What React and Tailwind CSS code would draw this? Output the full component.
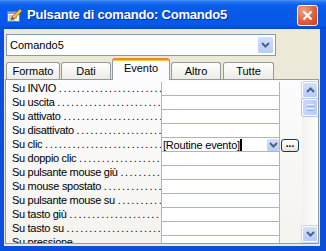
const rows = [
  "Su INVIO",
  "Su uscita",
  "Su attivato",
  "Su disattivato",
  "Su clic",
  "Su doppio clic",
  "Su pulsante mouse giù",
  "Su mouse spostato",
  "Su pulsante mouse su",
  "Su tasto giù",
  "Su tasto su",
  "Su pressione",
];

const tabs = [
  { label: "Formato", w: "w-[54px] ml-[2px]" },
  { label: "Dati", w: "w-[50px] ml-[1px]" },
  { label: "Evento", w: "w-[58px] ml-[1px]", active: true },
  { label: "Altro", w: "w-[50px] ml-[1px]" },
  { label: "Tutte", w: "w-[51px] ml-[2px]" },
];

const Chevron = ({ up }) => (
  <svg width="9" height="6" viewBox="0 0 9 6">
    <path
      d={up ? "M1 5 L4.5 1.5 L8 5" : "M1 1 L4.5 4.5 L8 1"}
      fill="none"
      stroke="#4d6185"
      strokeWidth="2"
    />
  </svg>
);

const ScrollButton = ({ up }) => (
  <div className="h-[16px] w-[16px] rounded-[2px] border border-white bg-[linear-gradient(to_bottom,#d3e0fd,#b6cbf7)] flex items-center justify-center shadow-[0_0_0_1px_#c3d3fb]">
    <Chevron up={up} />
  </div>
);

const TitleIcon = () => (
  <svg width="17" height="16" viewBox="0 0 17 16">
    <rect x="1.5" y="4.5" width="12" height="10" fill="#f4f6fb" stroke="#6d7c98" />
    <rect x="2" y="5" width="11" height="2" fill="#8aa2cc" />
    <path d="M3 9 H11 M3 11 H11 M3 13 H9" stroke="#8a93a6" strokeWidth="1" />
    <polygon points="6,10 14,2 16,4 8,12" fill="#f4c23c" stroke="#a26a12" strokeWidth="0.8" />
    <polygon points="6,10 8,12 5,13" fill="#3a3a3a" />
  </svg>
);

export default function App() {
  return (
    <div className="w-[326px] h-[251px] overflow-hidden bg-[#0b4fdc] flex flex-col font-['Liberation_Sans',Arial,sans-serif] text-[11px] text-black">
      {/* title bar */}
      <div className="h-[29px] shrink-0 flex items-center pl-[6px] bg-[linear-gradient(to_bottom,#4c97f8_0%,#2876f2_6%,#0a5ceb_18%,#0658e8_55%,#065ae9_85%,#0347cf_100%)]">
        <TitleIcon />
        <span className="ml-[4px] text-white font-bold text-[13px] tracking-[-0.2px] [text-shadow:1px_1px_0_#0b2f9a]">
          Pulsante di comando: Comando5
        </span>
        <div className="ml-auto mr-[8px] mt-[1px] h-[21px] w-[21px] rounded-[3px] border border-white bg-[radial-gradient(circle_at_30%_25%,#f0a088,#e2603c_55%,#c8391c)] flex items-center justify-center">
          <svg width="11" height="11" viewBox="0 0 11 11">
            <path d="M1.5 1.5 L9.5 9.5 M9.5 1.5 L1.5 9.5" stroke="white" strokeWidth="2.2" />
          </svg>
        </div>
      </div>

      {/* body */}
      <div className="ml-[4px] w-[316px] h-[217px] bg-[#ece9d8] pt-[5px] flex flex-col">
        {/* object combo */}
        <div className="ml-[2px] w-[270px] h-[22px] border border-[#7f9db9] bg-white flex items-center pl-[3px] pr-px">
          <span>Comando5</span>
          <div className="ml-auto h-[18px] w-[17px] rounded-[2px] border border-white bg-[linear-gradient(to_bottom,#d3e0fd,#b6cbf7)] flex items-center justify-center">
            <Chevron />
          </div>
        </div>

        {/* tabs */}
        <div className="mt-[2px] h-[21px] flex items-end">
          {tabs.map((t) =>
            t.active ? (
              <div
                key={t.label}
                className={`${t.w} relative z-10 -mb-px h-[22px] rounded-t-[3px] border-x border-[#919b9c] border-t-2 border-t-[#e68b2c] bg-[#fcfcfe] shadow-[inset_0_1px_0_#ffc83c] flex items-center justify-center pb-[3px]`}
              >
                {t.label}
              </div>
            ) : (
              <div
                key={t.label}
                className={`${t.w} h-[17px] rounded-t-[3px] border border-b-0 border-[#919b9c] bg-[linear-gradient(to_bottom,#ffffff,#ecebe6)] flex items-center justify-center pt-px`}
              >
                {t.label}
              </div>
            )
          )}
        </div>

        {/* property panel */}
        <div className="ml-px w-[314px] h-[165px] border border-[#919b9c] bg-[linear-gradient(to_bottom,#fcfcfe,#f4f3ee)] flex pt-[2px] overflow-hidden">
          <div className="w-[296px] flex flex-col">
            {rows.map((r) => (
              <div key={r} className="h-[14px] shrink-0 flex">
                <div className="w-[155px] pl-[6px] pr-[2px] overflow-hidden whitespace-nowrap leading-[13px] tracking-[-0.3px]">
                  {r}{" "}
                  <span className="tracking-[1.5px]">
                    ................................................
                  </span>
                </div>
                <div className="w-[119px] border-x border-b border-[#a9b6c9] bg-white flex items-center">
                  {r === "Su clic" && (
                    <>
                      <span className="pl-px leading-[12px] tracking-[-0.2px]">[Routine evento]</span>
                      <div className="w-[2px] h-[12px] bg-black"></div>
                      <div className="ml-auto h-[12px] w-[12px] rounded-[2px] bg-[linear-gradient(to_bottom,#d3e0fd,#b6cbf7)] flex items-center justify-center">
                        <Chevron />
                      </div>
                    </>
                  )}
                </div>
                {r === "Su clic" && (
                  <div className="ml-px mt-px h-[13px] w-[18px] rounded-[3px] border border-[#003c74] bg-[linear-gradient(to_bottom,#ffffff,#e6e4dc)] flex items-center justify-center text-[10px] font-bold leading-none pb-[3px]">
                    ...
                  </div>
                )}
              </div>
            ))}
          </div>

          {/* scrollbar */}
          <div className="w-[16px] h-[160px] flex flex-col bg-[linear-gradient(to_right,#f3f1ec,#fefefb)]">
            <ScrollButton up />
            <div className="mt-px h-[17px] rounded-[2px] border border-white bg-[linear-gradient(to_right,#c9d8fc,#b8cbf6)] shadow-[0_0_0_1px_#b0c4f3] flex flex-col items-center justify-center gap-[1px]">
              <div className="w-[7px] h-px bg-[#eef4fe]"></div>
              <div className="w-[7px] h-px bg-[#8cb0f8]"></div>
              <div className="w-[7px] h-px bg-[#eef4fe]"></div>
              <div className="w-[7px] h-px bg-[#8cb0f8]"></div>
            </div>
            <div className="flex-1"></div>
            <ScrollButton />
          </div>
        </div>
      </div>
    </div>
  );
}
